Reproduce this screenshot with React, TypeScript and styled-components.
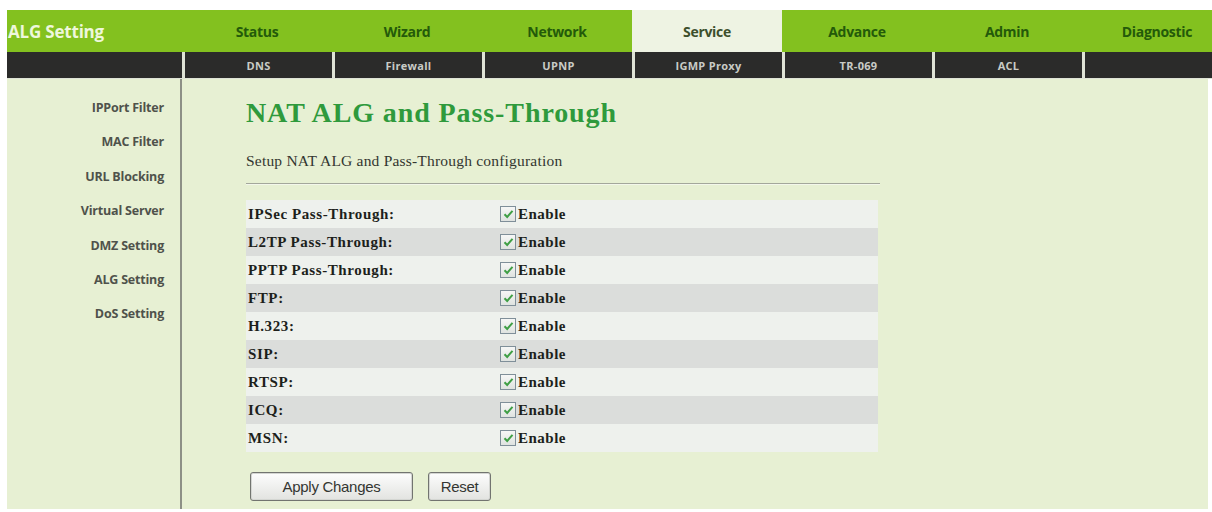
import React from 'react';
import styled, {createGlobalStyle} from "styled-components";

const GlobalStyle = createGlobalStyle`
  html, body {
    margin: 0;
    padding: 0;
    background: #ffffff;
    overflow: hidden;
  }
  body {
    padding: 10px 0 0 7px;
  }
`;

const TABS = ['Status', 'Wizard', 'Network', 'Service', 'Advance', 'Admin', 'Diagnostic'];
const SUB_TABS = ['DNS', 'Firewall', 'UPNP', 'IGMP Proxy', 'TR-069', 'ACL', ''];
const SIDE_LINKS = ['IPPort Filter', 'MAC Filter', 'URL Blocking', 'Virtual Server', 'DMZ Setting', 'ALG Setting', 'DoS Setting'];
const OPTIONS = ['IPSec Pass-Through:', 'L2TP Pass-Through:', 'PPTP Pass-Through:', 'FTP:', 'H.323:', 'SIP:', 'RTSP:', 'ICQ:', 'MSN:'];

const Page = styled.div`
  width: 1205px;
  display: flex;
  flex-direction: column;
`;

const TopBar = styled.div`
  display: grid;
  grid-template-columns: 175px repeat(7, 150px);
  height: 42px;
  background: #83c11f;
  overflow: hidden;
`;

const PageName = styled.div`
  display: flex;
  align-items: center;
  padding-left: 1px;
  font-family: "Open Sans", "DejaVu Sans", sans-serif;
  font-weight: 700;
  font-size: 17px;
  letter-spacing: -0.2px;
  color: #eef7dc;
`;

const Tab = styled.div<{ $active?: boolean }>`
  display: flex;
  align-items: center;
  justify-content: center;
  background: ${props => props.$active ? "#eef3e3" : "transparent"};
  font-family: "Open Sans", "DejaVu Sans", sans-serif;
  font-weight: 700;
  font-size: 14px;
  letter-spacing: -0.3px;
  color: ${props => props.$active ? "#3d4f2c" : "#245a0a"};
`;

const SubBar = styled.div`
  display: grid;
  grid-template-columns: 175px repeat(7, 150px);
  height: 27px;
  background: #dfe3d6;
  overflow: hidden;
`;

const SubTab = styled.div<{ $first?: boolean }>`
  display: flex;
  align-items: center;
  justify-content: center;
  background: #2b2b2a;
  margin-left: ${props => props.$first ? "0" : "3px"};
  margin-bottom: 1px;
  font-family: "Open Sans", "DejaVu Sans", sans-serif;
  font-weight: 700;
  font-size: 11px;
  letter-spacing: 0.3px;
  color: #c9cbc6;
`;

const Body = styled.div`
  display: grid;
  grid-template-columns: 175px 1fr;
  height: 430px;
  margin-right: 4px;
  background: #e7f0d3;
`;

const SideMenu = styled.nav`
  display: flex;
  flex-direction: column;
  align-items: flex-end;
  padding: 12px 16px 0 0;
  border-right: 2px solid #8d9086;
`;

const SideLink = styled.a`
  height: 34.4px;
  line-height: 34px;
  font-family: "Open Sans", "DejaVu Sans", sans-serif;
  font-weight: 700;
  font-size: 12.5px;
  letter-spacing: -0.2px;
  color: #4f524b;
  text-decoration: none;
`;

const Main = styled.main`
  display: flex;
  flex-direction: column;
  align-items: flex-start;
  padding: 18px 0 0 64px;
`;

const Title = styled.h1`
  margin: 0;
  line-height: 32px;
  font-family: "Liberation Serif", "Times New Roman", serif;
  font-weight: 700;
  font-size: 28px;
  letter-spacing: 0.9px;
  color: #2f9a3c;
`;

const Intro = styled.p`
  margin: 22px 0 0 0;
  line-height: 20px;
  font-family: "Liberation Serif", "Times New Roman", serif;
  font-size: 15.5px;
  letter-spacing: 0.2px;
  color: #333630;
`;

const Divider = styled.hr`
  width: 634px;
  margin: 12px 0 15px 0;
  border: none;
  border-top: 1px solid #a3a79b;
  border-bottom: 1px solid #f3f7ea;
`;

const OptionTable = styled.div`
  width: 632px;
  display: flex;
  flex-direction: column;
`;

const OptionRow = styled.div<{ $shade: boolean }>`
  display: grid;
  grid-template-columns: 254px 1fr;
  align-items: center;
  height: 28px;
  background: ${props => props.$shade ? "#dbdddb" : "#eef1ed"};
`;

const OptionLabel = styled.span`
  padding-left: 2px;
  font-family: "Liberation Serif", "Times New Roman", serif;
  font-weight: 700;
  font-size: 15px;
  letter-spacing: 0.6px;
  color: #1d1f1b;
`;

const CheckCell = styled.label`
  display: flex;
  align-items: center;
  gap: 2px;
  font-family: "Liberation Serif", "Times New Roman", serif;
  font-weight: 700;
  font-size: 15px;
  letter-spacing: 0.5px;
  color: #1d1f1b;
`;

const Box = styled.span`
  display: flex;
  align-items: center;
  justify-content: center;
  width: 14px;
  height: 14px;
  border: 1px solid #7f8f99;
  background: linear-gradient(#f6f7f6, #dfe3e0);
`;

const Actions = styled.div`
  display: flex;
  gap: 15px;
  margin: 20px 0 0 4px;
`;

const Button = styled.button<{ $wide?: boolean }>`
  height: 29px;
  width: ${props => props.$wide ? "163px" : "63px"};
  padding: 0;
  border: 1px solid #727470;
  border-radius: 3px;
  box-shadow: inset 0 0 0 1px #d4d6d2;
  background: linear-gradient(#fdfdfd, #e2e3e0);
  font-family: "Liberation Sans", Arial, sans-serif;
  font-size: 15px;
  letter-spacing: -0.3px;
  color: #343632;
`;

const Check = () => (
    <svg width="11" height="10" viewBox="0 0 11 10">
        <path d="M1.5 5.2 L4.2 8 L9.5 1.8" fill="none" stroke="#3f9f45" strokeWidth="2"/>
    </svg>
);

const App = () => {
    return (
        <Page>
            <GlobalStyle/>
            <TopBar>
                <PageName>ALG Setting</PageName>
                {TABS.map(tab => <Tab key={tab} $active={tab === 'Service'}>{tab}</Tab>)}
            </TopBar>
            <SubBar>
                <SubTab $first/>
                {SUB_TABS.map((tab, i) => <SubTab key={i}>{tab}</SubTab>)}
            </SubBar>
            <Body>
                <SideMenu>
                    {SIDE_LINKS.map(link => <SideLink key={link} href="#">{link}</SideLink>)}
                </SideMenu>
                <Main>
                    <Title>NAT ALG and Pass-Through</Title>
                    <Intro>Setup NAT ALG and Pass-Through configuration</Intro>
                    <Divider/>
                    <OptionTable>
                        {OPTIONS.map((option, i) =>
                            <OptionRow key={option} $shade={i % 2 === 1}>
                                <OptionLabel>{option}</OptionLabel>
                                <CheckCell>
                                    <Box><Check/></Box>
                                    Enable
                                </CheckCell>
                            </OptionRow>
                        )}
                    </OptionTable>
                    <Actions>
                        <Button $wide>Apply Changes</Button>
                        <Button>Reset</Button>
                    </Actions>
                </Main>
            </Body>
        </Page>
    );
};

export default App;
